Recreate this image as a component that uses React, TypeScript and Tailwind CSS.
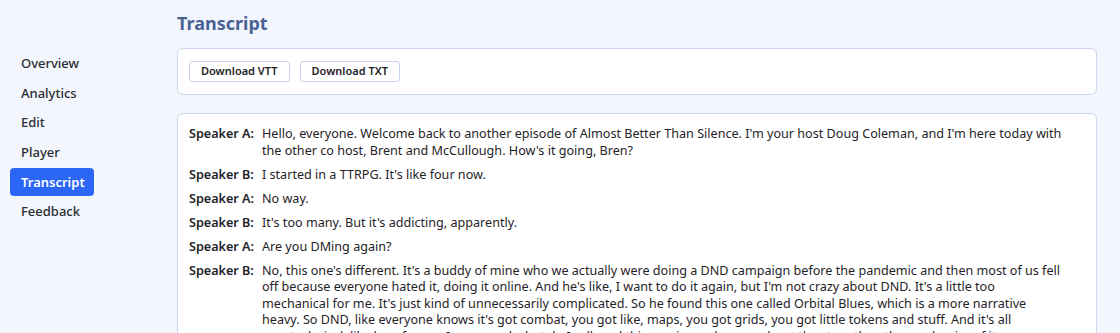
import React from 'react';

const navItems = ['Overview', 'Analytics', 'Edit', 'Player', 'Transcript', 'Feedback'];

const lines: { speaker: string; text: string[] }[] = [
  {
    speaker: 'Speaker A',
    text: [
      "Hello, everyone. Welcome back to another episode of Almost Better Than Silence. I'm your host Doug Coleman, and I'm here today with",
      "the other co host, Brent and McCullough. How's it going, Bren?",
    ],
  },
  { speaker: 'Speaker B', text: ["I started in a TTRPG. It's like four now."] },
  { speaker: 'Speaker A', text: ['No way.'] },
  { speaker: 'Speaker B', text: ["It's too many. But it's addicting, apparently."] },
  { speaker: 'Speaker A', text: ['Are you DMing again?'] },
  {
    speaker: 'Speaker B',
    text: [
      "No, this one's different. It's a buddy of mine who we actually were doing a DND campaign before the pandemic and then most of us fell",
      "off because everyone hated it, doing it online. And he's like, I want to do it again, but I'm not crazy about DND. It's a little too",
      "mechanical for me. It's just kind of unnecessarily complicated. So he found this one called Orbital Blues, which is a more narrative",
      "heavy. So DND, like everyone knows it's got combat, you got like, maps, you got grids, you got little tokens and stuff. And it's all",
      "very technical, like how far can I move and what do I roll, and this one is much more about the story than the mechanics of it.",
    ],
  },
];

const App: React.FC = () => {
  return (
    <div
      className="flex h-[333px] overflow-hidden bg-[#f3f6fc] text-[#1f2328]"
      style={{ fontFamily: '"Noto Sans", Inter, Arial, sans-serif' }}
    >
      {/* Sidebar */}
      <nav className="w-[177px] shrink-0 pl-[10px] pt-[50px]">
        <ul className="flex flex-col gap-[1.6px]">
          {navItems.map(item => (
            <li
              key={item}
              className={
                item === 'Transcript'
                  ? 'flex h-[28px] w-[84px] items-center rounded-[4px] bg-[#2b66f6] px-[11px] text-[13px] font-semibold text-white'
                  : 'flex h-[28px] items-center px-[11px] text-[13px] font-medium text-[#2a2d33]'
              }
            >
              {item}
            </li>
          ))}
        </ul>
      </nav>

      {/* Main */}
      <main className="w-[920px] shrink-0">
        <h1 className="mt-[10px] text-[18px] font-bold leading-[26px] text-[#4a6293]">Transcript</h1>

        <div className="mt-[12px] flex gap-[10px] rounded-[6px] border border-[#cbd8ef] bg-white px-[11px] py-[12px]">
          <button className="h-[21px] rounded-[3px] border border-[#c6d3ec] bg-white px-[11px] text-[11px] font-semibold text-[#1f2328]">
            Download VTT
          </button>
          <button className="h-[21px] rounded-[3px] border border-[#c6d3ec] bg-white px-[11px] text-[11px] font-semibold text-[#1f2328]">
            Download TXT
          </button>
        </div>

        <div className="mt-[18px] rounded-[6px] border border-[#cbd8ef] bg-white px-[11px] pt-[12px] pb-4">
          <div className="flex flex-col gap-[7.5px] text-[12.6px] leading-[16.5px]">
            {lines.map((line, i) => (
              <div key={i} className="flex">
                <span className="w-[73px] shrink-0 font-semibold">{line.speaker}:</span>
                <div className="flex-1">
                  {line.text.map((t, j) => (
                    <div key={j} className="whitespace-nowrap">
                      {t}
                    </div>
                  ))}
                </div>
              </div>
            ))}
          </div>
        </div>
      </main>
    </div>
  );
};

export default App;
